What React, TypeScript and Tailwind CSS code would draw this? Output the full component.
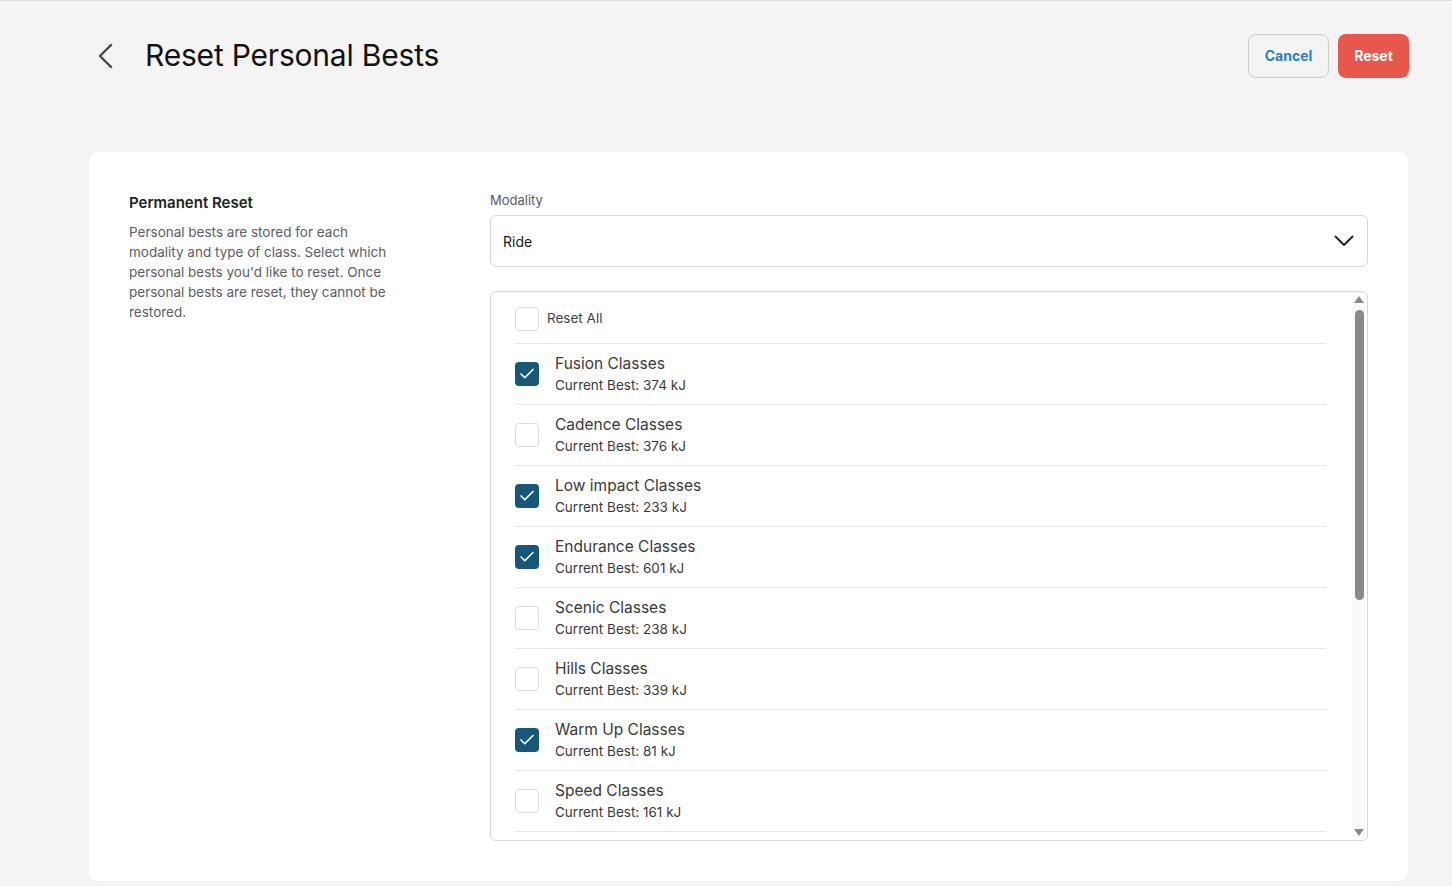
import { Check } from "lucide-react";

const classes = [
  { name: "Fusion Classes", best: 374, checked: true },
  { name: "Cadence Classes", best: 376, checked: false },
  { name: "Low impact Classes", best: 233, checked: true },
  { name: "Endurance Classes", best: 601, checked: true },
  { name: "Scenic Classes", best: 238, checked: false },
  { name: "Hills Classes", best: 339, checked: false },
  { name: "Warm Up Classes", best: 81, checked: true },
  { name: "Speed Classes", best: 161, checked: false },
  { name: "Climb Classes", best: 412, checked: false },
  { name: "Intervals Classes", best: 298, checked: false },
  { name: "Power Zone Classes", best: 455, checked: false },
  { name: "Tabata Classes", best: 187, checked: false },
  { name: "Heart Rate Zone Classes", best: 520, checked: false },
  { name: "Pro Cyclist Classes", best: 610, checked: false },
];

const Box = ({ checked }: { checked: boolean }) =>
  checked ? (
    <div className="flex h-6 w-6 shrink-0 items-center justify-center rounded-[4px] bg-[#15587b]">
      <Check className="h-[18px] w-[18px] text-white" strokeWidth={2.2} />
    </div>
  ) : (
    <div className="h-6 w-6 shrink-0 rounded-[4px] border border-[#dcdcdc] bg-white" />
  );

// fake classic scrollbar (headless hides the native one)
const ScrollBar = () => (
  <div className="mr-[1px] flex w-[14px] shrink-0 flex-col items-center bg-[#fafafa] pt-[4px] pb-[4px]">
    <svg width="10" height="7" viewBox="0 0 10 7">
      <path d="M5 0 L10 7 L0 7 Z" fill="#8a8a8a" />
    </svg>
    <div className="flex w-full flex-1 flex-col items-center pt-[7px] pb-[6px]">
      <div className="h-[290px] w-[9px] rounded-full bg-[#8a8a8a]" />
    </div>
    <svg width="10" height="7" viewBox="0 0 10 7">
      <path d="M0 0 L10 0 L5 7 Z" fill="#8a8a8a" />
    </svg>
  </div>
);

export default function App() {
  return (
    <div
      className="min-h-[886px] border-t border-[#dde2da] bg-[#f3f4f3] text-[#333]"
      style={{ fontFamily: "Inter, 'Noto Sans', sans-serif" }}
    >
      <div className="flex items-center justify-between pl-[97px] pr-[43px] pt-[32px]">
        <div className="flex items-center">
          <svg width="17" height="26" viewBox="0 0 17 26" fill="none">
            <path d="M14 2 L3 13 L14 24" stroke="#444" strokeWidth="2.4" strokeLinecap="round" strokeLinejoin="round" />
          </svg>
          <h1 className="ml-[31px] text-[30px] font-normal tracking-[-0.2px] text-[#111]">
            Reset Personal Bests
          </h1>
        </div>
        <div className="flex gap-[9px]">
          <button className="h-[44px] w-[81px] rounded-[8px] border border-[#c9cccc] text-[14px] font-bold text-[#2b7fc2]">
            Cancel
          </button>
          <button className="h-[44px] w-[71px] rounded-[8px] bg-[#e8574c] text-[14px] font-bold text-white">
            Reset
          </button>
        </div>
      </div>

      <div className="ml-[89px] mr-[44px] mt-[74px] flex rounded-[10px] bg-white pb-[40px] pl-[40px] pr-[40px] pt-[39px]">
        <div className="w-[361px] shrink-0">
          <h2 className="pt-[1px] text-[15px] font-semibold leading-[22px] text-[#222]">Permanent Reset</h2>
          <p className="mt-[8px] w-[264px] text-[13.5px] leading-[20px] text-[#5b6066]">
            Personal bests are stored for each modality and type of class. Select which personal
            bests you'd like to reset. Once personal bests are reset, they cannot be restored.
          </p>
        </div>
        <div className="flex-1">
          <div className="text-[13px] leading-[18px] text-[#555a60]">Modality</div>
          <div className="mt-[6px] flex h-[52px] items-center justify-between rounded-[6px] border border-[#d6d8d8] pl-[12px] pr-[13px]">
            <span className="text-[14px] text-[#1a1a1a]">Ride</span>
            <svg width="20" height="12" viewBox="0 0 20 12" fill="none">
              <path d="M1.5 1.5 L10 10 L18.5 1.5" stroke="#222" strokeWidth="2" strokeLinecap="round" strokeLinejoin="round" />
            </svg>
          </div>
          <div className="mt-[24px] flex h-[550px] overflow-hidden rounded-[6px] border border-[#d6d8d8]">
            <div className="flex-1 overflow-hidden pl-[24px] pr-[25px]">
              <div className="flex h-[52px] items-center border-b border-[#e6e8e8] pt-[2px]">
                <Box checked={false} />
                <span className="ml-[8px] text-[13.5px] text-[#444]">Reset All</span>
              </div>
              {classes.map((c) => (
                <div key={c.name} className="flex h-[61px] items-center border-b border-[#e6e8e8]">
                  <Box checked={c.checked} />
                  <div className="ml-[16px] flex flex-col">
                    <span className="text-[15.5px] leading-[20px] text-[#3a3a3a]">{c.name}</span>
                    <span className="mt-[2px] text-[13.5px] leading-[18px] text-[#3a3a3a]">
                      Current Best: {c.best} kJ
                    </span>
                  </div>
                </div>
              ))}
            </div>
            <ScrollBar />
          </div>
        </div>
      </div>
    </div>
  );
}
